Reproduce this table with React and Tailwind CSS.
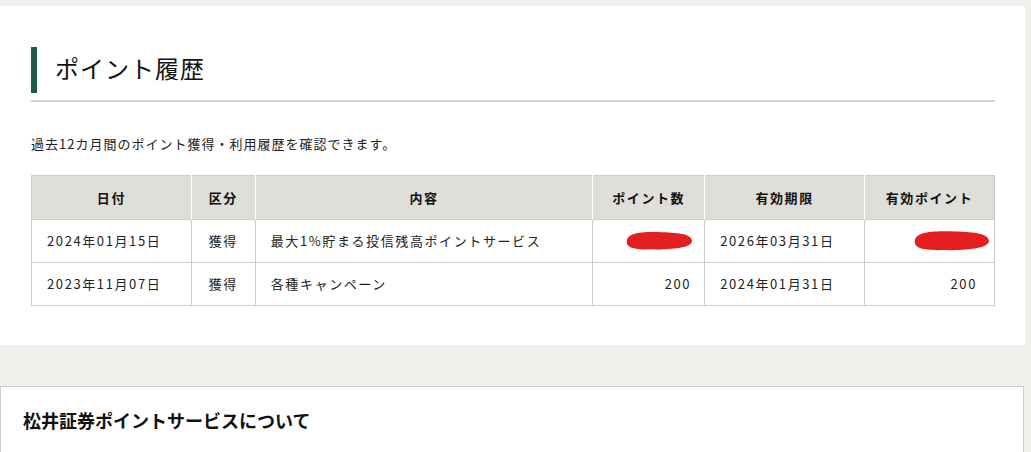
import React from "react";

const font = { fontFamily: '"Noto Sans CJK JP", "Liberation Sans", sans-serif' };

function Scribble({ w, h }) {
  return (
    <svg width={w} height={h} viewBox={`0 0 ${w} ${h}`} className="inline-block align-middle">
      <path
        d={`M4 ${h * 0.45} C6 ${h * 0.1}, ${w * 0.3} ${h * 0.08}, ${w * 0.55} ${h * 0.1} C${w * 0.8} ${h * 0.12}, ${w - 2} ${h * 0.2}, ${w - 2} ${h * 0.5} C${w - 2} ${h * 0.85}, ${w * 0.6} ${h * 0.9}, ${w * 0.4} ${h * 0.88} C${w * 0.15} ${h * 0.9}, 2 ${h * 0.8}, 4 ${h * 0.45} Z`}
        fill="#e3201f"
      />
    </svg>
  );
}

const rows = [
  { date: "2024年01月15日", kind: "獲得", desc: "最大1%貯まる投信残高ポイントサービス", pts: null, exp: "2026年03月31日", valid: null },
  { date: "2023年11月07日", kind: "獲得", desc: "各種キャンペーン", pts: "200", exp: "2024年01月31日", valid: "200" },
];

export default function App() {
  return (
    <div className="min-h-screen bg-[#f2f0eb] pt-[6px] text-[#222]" style={font}>
      <div className="w-[1025px] bg-white px-[31px] pt-[41px] pb-[39px]">
        <div className="flex h-[46px] items-center border-l-[6px] border-[#1f5a45] pl-[18px]">
          <h1 className="text-[24px] leading-none tracking-[1px] text-[#111]" style={{ fontFamily: '"Liberation Serif", "Noto Sans CJK JP", serif' }}>
            ポイント履歴
          </h1>
        </div>
        <div className="mt-[7px] h-[2px] w-[964px] bg-[#d0d0d0]" />
        <p className="mt-[32px] text-[13px] leading-[20px] tracking-[1px]">
          過去12カ月間のポイント獲得・利用履歴を確認できます。
        </p>
        <table className="mt-[21px] w-[964px] border-collapse border border-[#cccccc] text-[13px] tracking-[1.6px]">
          <thead>
            <tr className="h-[44px] bg-[#e0ded8] text-[#111]">
              <th className="w-[160px] border-r border-white font-bold">日付</th>
              <th className="w-[64px] border-r border-white font-bold">区分</th>
              <th className="w-[338px] border-r border-white font-bold">内容</th>
              <th className="w-[112px] border-r border-white font-bold">ポイント数</th>
              <th className="w-[160px] border-r border-white font-bold">有効期限</th>
              <th className="w-[130px] font-bold">有効ポイント</th>
            </tr>
          </thead>
          <tbody>
            {rows.map((r, i) => (
              <tr key={i} className="h-[43px] border-t border-[#cccccc]">
                <td className="border-r border-[#cccccc] px-[15px]">{r.date}</td>
                <td className="border-r border-[#cccccc] text-center">{r.kind}</td>
                <td className="border-r border-[#cccccc] px-[15px]">{r.desc}</td>
                <td className="border-r border-[#cccccc] pr-[10px] text-right">
                  {r.pts ? <span className="pr-[3px]">{r.pts}</span> : <Scribble w={71} h={22} />}
                </td>
                <td className="border-r border-[#cccccc] px-[15px]">{r.exp}</td>
                <td className="pr-[3px] text-right">
                  {r.valid ? <span className="pr-[14px]">{r.valid}</span> : <Scribble w={80} h={24} />}
                </td>
              </tr>
            ))}
          </tbody>
        </table>
      </div>
      <div className="mt-[41px] h-[66px] w-[1024px] border border-b-0 border-[#cccccc] bg-white px-[22px] pt-[22px]">
        <h2 className="text-[18px] font-bold leading-[22px] text-[#111]">松井証券ポイントサービスについて</h2>
      </div>
    </div>
  );
}
